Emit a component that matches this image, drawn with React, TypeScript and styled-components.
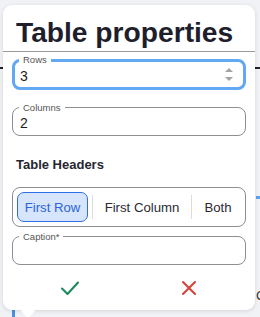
import React, { useState } from 'react';
import styled, { createGlobalStyle } from 'styled-components';

const Global = createGlobalStyle`
  html, body {
    margin: 0;
    padding: 0;
    background: #eef0f3;
    font-family: "Liberation Sans", Arial, sans-serif;
  }
`;

const Page = styled.div`
  position: relative;
  width: 260px;
  height: 317px;
  overflow: hidden;
  background: #f1f2f5;
`;

const Rule = styled.div<{ $top: number; $left: number; $w: number; $color: string; $h?: number }>`
  position: absolute;
  top: ${(p) => p.$top}px;
  left: ${(p) => p.$left}px;
  width: ${(p) => p.$w}px;
  height: ${(p) => p.$h ?? 2}px;
  background: ${(p) => p.$color};
`;

const Peek = styled.span`
  position: absolute;
  top: 288px;
  left: 256px;
  font-size: 13px;
  color: #333;
`;

const Popover = styled.div`
  position: absolute;
  top: 5px;
  left: 3px;
  width: 252px;
  height: 305px;
  background: #fff;
  border-radius: 9px;
  box-shadow: 0 1px 4px rgba(0, 0, 0, 0.12);
  display: flex;
  flex-direction: column;
  box-sizing: border-box;

  &::after {
    content: '';
    position: absolute;
    left: 20px;
    bottom: -6px;
    width: 10px;
    height: 10px;
    background: #fff;
    transform: rotate(45deg);
  }
`;

const Title = styled.h1`
  margin: 0;
  padding: 9px 0 0 13px;
  height: 37px;
  font-size: 28.2px;
  font-weight: 700;
  color: #1e1e2c;
  line-height: 36px;
  border-bottom: 1px solid #9a9a9a;
`;

const Body = styled.div`
  display: flex;
  flex-direction: column;
  padding: 7px 9px 0 9px;
`;

const Field = styled.div<{ $focused?: boolean; $gap?: number }>`
  position: relative;
  box-sizing: border-box;
  height: ${(p) => (p.$focused ? 31 : 29)}px;
  margin-top: ${(p) => p.$gap ?? 0}px;
  border: ${(p) => (p.$focused ? '3px solid #62a8f2' : '1px solid #8e8e93')};
  border-radius: 8px;
  display: flex;
  align-items: center;
  padding: 0 ${(p) => (p.$focused ? 7 : 9)}px 0 ${(p) => (p.$focused ? 5 : 7)}px;
`;

const Legend = styled.span<{ $focused?: boolean }>`
  position: absolute;
  top: ${(p) => (p.$focused ? -8 : -6)}px;
  left: ${(p) => (p.$focused ? 4 : 6)}px;
  padding: 0 4px;
  background: #fff;
  font-size: 9.5px;
  line-height: 11px;
  color: #555;
`;

const Value = styled.span`
  flex: 1;
  font-size: 14px;
  color: #1d1d1d;
  padding-top: 3px;
`;

const Spinner = styled.div`
  display: flex;
  flex-direction: column;
  gap: 5px;
  align-items: center;
  margin-right: 3px;
`;

const Tri = styled.span<{ $down?: boolean }>`
  width: 0;
  height: 0;
  border-left: 4px solid transparent;
  border-right: 4px solid transparent;
  ${(p) => (p.$down ? 'border-top: 4px solid #a3a3a3;' : 'border-bottom: 4px solid #a3a3a3;')}
`;

const Heading = styled.h2`
  margin: 21px 0 0 4px;
  font-size: 13px;
  font-weight: 700;
  color: #262630;
  line-height: 16px;
`;

const Toggle = styled.div`
  margin-top: 14px;
  box-sizing: border-box;
  height: 40px;
  border: 1px solid #8e8e93;
  border-radius: 8px;
  display: flex;
  align-items: center;
  padding: 0 4px;
`;

const Option = styled.button<{ $active?: boolean; $w: number }>`
  box-sizing: border-box;
  width: ${(p) => p.$w}px;
  height: 30px;
  border-radius: 7px;
  border: 1px solid ${(p) => (p.$active ? '#2f6fe4' : 'transparent')};
  background: ${(p) => (p.$active ? '#d7e5fc' : 'transparent')};
  color: ${(p) => (p.$active ? '#2a64d6' : '#2a2a33')};
  font-family: inherit;
  font-size: 13.2px;
  padding: 0;
  cursor: pointer;
`;

const Sep = styled.span`
  width: 1px;
  height: 24px;
  background: #dcdcdc;
  margin: 0 4px;
`;

const Actions = styled.div`
  display: flex;
  justify-content: space-between;
  margin-top: 10px;
  padding: 0 44px 0 45px;
`;

const IconBtn = styled.button`
  background: none;
  border: 0;
  padding: 0;
  width: 26px;
  height: 26px;
  display: flex;
  align-items: center;
  justify-content: center;
  cursor: pointer;
`;

const Check = () => (
  <svg width="20" height="16" viewBox="0 0 20 16">
    <path d="M2 8.5 L7.5 14 L18 2.5" fill="none" stroke="#1d8a5c" strokeWidth="2.1" strokeLinecap="round" strokeLinejoin="round" />
  </svg>
);

const Cross = () => (
  <svg width="16" height="16" viewBox="0 0 16 16">
    <path d="M2 2 L14 14 M14 2 L2 14" fill="none" stroke="#d8423c" strokeWidth="2.1" strokeLinecap="round" />
  </svg>
);

export default function App() {
  const [mode, setMode] = useState('row');
  return (
    <Page>
      <Global />
      <Rule $top={67} $left={0} $w={260} $color="#222" />
      <Rule $top={196} $left={256} $w={4} $color="#5ba3ef" $h={3} />
      <Rule $top={300} $left={12} $w={3} $color="#4a8fe0" $h={17} />
      <Peek>C</Peek>
      <Popover>
        <Title>Table properties</Title>
        <Body>
          <Field $focused $gap={0}>
            <Legend $focused>Rows</Legend>
            <Value>3</Value>
            <Spinner>
              <Tri />
              <Tri $down />
            </Spinner>
          </Field>
          <Field $gap={17}>
            <Legend>Columns</Legend>
            <Value>2</Value>
          </Field>
          <Heading>Table Headers</Heading>
          <Toggle>
            <Option $w={71} $active={mode === 'row'} onClick={() => setMode('row')}>First Row</Option>
            <Sep />
            <Option $w={90} $active={mode === 'col'} onClick={() => setMode('col')}>First Column</Option>
            <Sep />
            <Option $w={44} $active={mode === 'both'} onClick={() => setMode('both')}>Both</Option>
          </Toggle>
          <Field $gap={9}>
            <Legend>Caption*</Legend>
            <Value />
          </Field>
          <Actions>
            <IconBtn><Check /></IconBtn>
            <IconBtn><Cross /></IconBtn>
          </Actions>
        </Body>
      </Popover>
    </Page>
  );
}
